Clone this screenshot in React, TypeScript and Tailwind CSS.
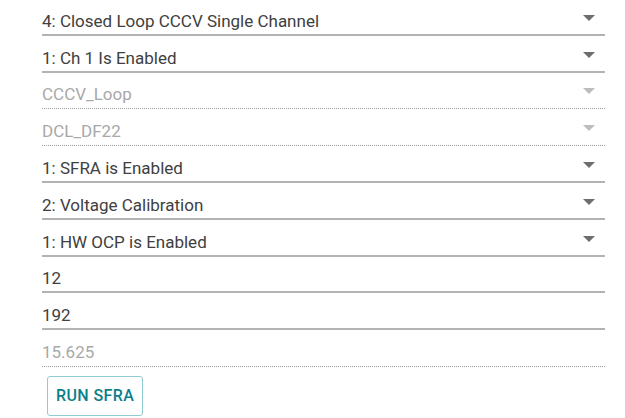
import React from 'react';

type Field = {
  value: string,
  select?: boolean,
  disabled?: boolean,
};

const FIELDS: Field[] = [
  { value: '4: Closed Loop CCCV Single Channel', select: true },
  { value: '1: Ch 1 Is Enabled', select: true },
  { value: 'CCCV_Loop', select: true, disabled: true },
  { value: 'DCL_DF22', select: true, disabled: true },
  { value: '1: SFRA is Enabled', select: true },
  { value: '2: Voltage Calibration', select: true },
  { value: '1: HW OCP is Enabled', select: true },
  { value: '12' },
  { value: '192' },
  { value: '15.625', disabled: true },
];

function DropArrow({ disabled }: { disabled?: boolean }) {
  return (
    <svg width="12" height="6" viewBox="0 0 12 6" className="mb-[12px] mr-[10px] shrink-0">
      <path d="M0 0h12L6 6z" fill={disabled ? '#bdbdbd' : '#6e6e6e'} />
    </svg>
  );
}

function FieldRow({ field }: { field: Field }) {
  const border = field.disabled
    ? 'border-b border-dotted border-[#9e9e9e] pb-[2px]'
    : 'border-b-2 border-[#b3b3b3] pb-[1px]';

  return (
    <div className={`flex h-[36.8px] items-end ${border}`}>
      <span
        className={`flex-1 text-[17px] leading-[24px] ${field.disabled ? 'text-[#a8a8a8]' : 'text-[#404040]'}`}
      >
        {field.value}
      </span>
      {field.select && <DropArrow disabled={field.disabled} />}
    </div>
  );
}

export default function App() {
  return (
    <main className="h-[418px] w-[625px] overflow-hidden bg-white pl-[42px] pr-[20px] font-['Roboto',sans-serif]">
      <div className="-mt-[1px] flex flex-col">
        {FIELDS.map((field, index) => (
          <FieldRow key={index} field={field} />
        ))}
      </div>
      <button className="ml-[5px] mt-[9px] h-[40px] rounded-[3px] border border-[#8fcdd3] px-[8px] text-[16px] font-medium tracking-[0.4px] text-[#0b7f8a]">
        RUN SFRA
      </button>
    </main>
  );
}
